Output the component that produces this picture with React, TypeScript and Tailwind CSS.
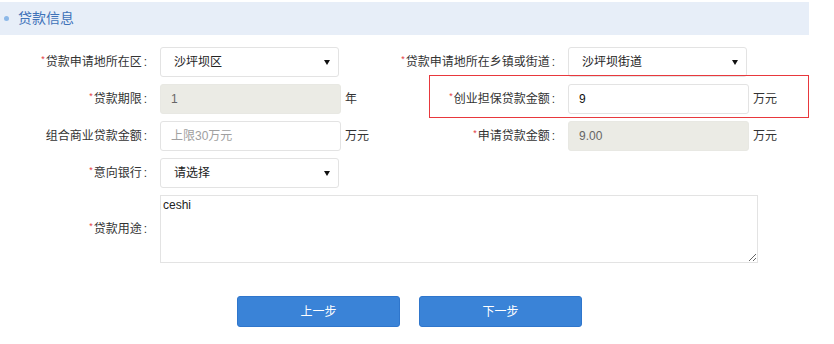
import React from "react";

const font = "font-['Liberation_Sans','Noto_Sans_CJK_SC',sans-serif]";

function Label({text, required = true, className = ""}: {text: string; required?: boolean; className?: string}) {
  return (
    <div className={`flex items-center justify-end whitespace-nowrap text-[12px] text-[#333] ${className}`}>
      {required && <span className="mr-[1px] -mt-[6px] text-[9px] leading-none text-[#e4393c]">*</span>}
      <span>{text}</span>
      <span className="ml-[2px] mr-[1px]">:</span>
    </div>
  );
}

function Select({value}: {value: string}) {
  return (
    <div className="ml-[12px] flex h-[30px] w-[179px] items-center justify-between rounded-[3px] border border-[#e3e3e3] bg-white pl-[13px] pr-[8px] text-[12px] text-[#222]">
      <span>{value}</span>
      <svg width="6" height="5" viewBox="0 0 6 5">
        <path d="M0 0H6L3 5Z" fill="#111" />
      </svg>
    </div>
  );
}

function Input({value, placeholder, disabled}: {value?: string; placeholder?: string; disabled?: boolean}) {
  return (
    <input
      readOnly
      defaultValue={value}
      placeholder={placeholder}
      className={`ml-[12px] h-[30px] w-[181px] rounded-[3px] border px-[10px] text-[12px] outline-none placeholder:text-[#a0a0a0] ${
        disabled ? "border-[#e8e8e3] bg-[#ebebe5] text-[#666]" : "border-[#e3e3e3] bg-white text-[#111]"
      }`}
    />
  );
}

function Unit({text}: {text: string}) {
  return <span className="ml-[4px] text-[12px] text-[#333]">{text}</span>;
}

export default function App() {
  return (
    <div className={`relative h-[344px] w-[834px] bg-white ${font}`}>
      {/* section header */}
      <div className="pt-[2px]">
        <div className="flex h-[33px] w-[809px] items-center bg-[#e7eef8]">
          <span className="ml-[4px] h-[5px] w-[5px] rounded-full bg-[#8cb8e8]" />
          <span className="ml-[9px] text-[14px] text-[#3e72b8]">贷款信息</span>
        </div>
      </div>

      {/* form rows */}
      <div className="mt-[12px] flex flex-col gap-[7px]">
        <div className="flex items-center">
          <div className="flex w-[404px] items-center">
            <Label text="贷款申请地所在区" className="w-[148px]" />
            <Select value="沙坪坝区" />
          </div>
          <div className="flex items-center">
            <Label text="贷款申请地所在乡镇或街道" className="w-[152px]" />
            <Select value="沙坪坝街道" />
          </div>
        </div>

        <div className="flex items-center">
          <div className="flex w-[404px] items-center">
            <Label text="贷款期限" className="w-[148px]" />
            <Input value="1" disabled />
            <Unit text="年" />
          </div>
          <div className="flex items-center">
            <Label text="创业担保贷款金额" className="w-[152px]" />
            <Input value="9" />
            <Unit text="万元" />
          </div>
        </div>

        <div className="flex items-center">
          <div className="flex w-[404px] items-center">
            <Label text="组合商业贷款金额" required={false} className="w-[148px]" />
            <Input placeholder="上限30万元" />
            <Unit text="万元" />
          </div>
          <div className="flex items-center">
            <Label text="申请贷款金额" className="w-[152px]" />
            <Input value="9.00" disabled />
            <Unit text="万元" />
          </div>
        </div>

        <div className="flex items-center">
          <Label text="意向银行" className="w-[148px]" />
          <Select value="请选择" />
        </div>

        <div className="flex items-center">
          <Label text="贷款用途" className="w-[148px]" />
          <textarea
            readOnly
            defaultValue="ceshi"
            className="ml-[12px] h-[68px] w-[598px] border border-[#e3e3e3] p-[2px] text-[12px] leading-[14px] text-[#222] outline-none"
          />
        </div>
      </div>

      {/* buttons */}
      <div className="mt-[33px] flex gap-[19px] pl-[237px]">
        <button className="h-[31px] w-[163px] rounded-[3px] border border-[#2f76cc] bg-[#3a83d7] text-[12px] text-white">上一步</button>
        <button className="h-[31px] w-[163px] rounded-[3px] border border-[#2f76cc] bg-[#3a83d7] text-[12px] text-white">下一步</button>
      </div>

      {/* red annotation box */}
      <div className="pointer-events-none absolute left-[429px] top-[75px] h-[43px] w-[380px] border border-[#e8383d]" />
    </div>
  );
}
